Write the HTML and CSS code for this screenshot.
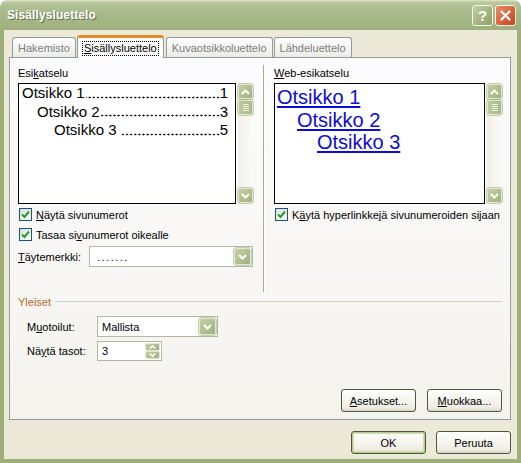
FILE: index.html
```html
<!DOCTYPE html>
<html lang="fi">
<head>
<meta charset="utf-8">
<title>Sisällysluettelo</title>
<link rel="stylesheet" href="styles.css">
</head>
<body>
<div class="window">
  <div class="titlebar">
    <span class="title">Sisällysluettelo</span>
    <div class="tb-buttons">
      <span class="tb-btn help">?</span>
      <span class="tb-btn close"><svg width="11" height="11" viewBox="0 0 11 11"><path d="M1.5 1.5 L9.5 9.5 M9.5 1.5 L1.5 9.5" stroke="#fff" stroke-width="2.2" stroke-linecap="round"/></svg></span>
    </div>
  </div>
  <div class="frame">
    <div class="tabs">
      <div class="tab">Hakemisto</div>
      <div class="tab selected"><span class="focus"><u>S</u>isällysluettelo</span></div>
      <div class="tab">Kuvaotsikkoluettelo</div>
      <div class="tab">Lähdeluettelo</div>
    </div>
    <div class="panel">
      <div class="panel-top">
        <div class="col col-left">
          <div class="field-label">Esi<u>k</u>atselu</div>
          <div class="preview-row">
            <div class="preview toc">
              <div class="toc-line"><span>Otsikko 1</span><span class="dots"></span><span>1</span></div>
              <div class="toc-line l2"><span>Otsikko 2</span><span class="dots"></span><span>3</span></div>
              <div class="toc-line l3"><span>Otsikko 3</span><span class="dots gap"></span><span>5</span></div>
            </div>
            <div class="scrollbar">
              <div class="sb-btn"><svg width="9" height="6" viewBox="0 0 9 6"><polyline points="1,5 4.5,1.5 8,5" fill="none" stroke="#fff" stroke-width="2"/></svg></div>
              <div class="sb-thumb"><i></i><i></i><i></i><i></i></div>
              <div class="sb-track"></div>
              <div class="sb-btn"><svg width="9" height="6" viewBox="0 0 9 6"><polyline points="1,1 4.5,4.5 8,1" fill="none" stroke="#fff" stroke-width="2"/></svg></div>
            </div>
          </div>
          <div class="check-row first"><span class="checkbox"><svg width="9" height="9" viewBox="0 0 9 9"><polyline points="1,4.5 3.5,7 8,1.5" fill="none" stroke="#21a121" stroke-width="2"/></svg></span><span><u>N</u>äytä sivunumerot</span></div>
          <div class="check-row second"><span class="checkbox"><svg width="9" height="9" viewBox="0 0 9 9"><polyline points="1,4.5 3.5,7 8,1.5" fill="none" stroke="#21a121" stroke-width="2"/></svg></span><span>Tasaa si<u>v</u>unumerot oikealle</span></div>
          <div class="fill-row">
            <span class="fill-label"><u>T</u>äytemerkki:</span>
            <div class="combo combo-fill"><span class="combo-text leader-text">.......</span><span class="drop-btn"><svg width="9" height="6" viewBox="0 0 9 6"><polyline points="1,1 4.5,4.5 8,1" fill="none" stroke="#fff" stroke-width="2"/></svg></span></div>
          </div>
        </div>
        <div class="vsep"></div>
        <div class="col col-right">
          <div class="field-label"><u>W</u>eb-esikatselu</div>
          <div class="preview-row">
            <div class="preview web">
              <div class="web-line"><span class="link">Otsikko 1</span></div>
              <div class="web-line w2"><span class="link">Otsikko 2</span></div>
              <div class="web-line w3"><span class="link">Otsikko 3</span></div>
            </div>
            <div class="scrollbar">
              <div class="sb-btn"><svg width="9" height="6" viewBox="0 0 9 6"><polyline points="1,5 4.5,1.5 8,5" fill="none" stroke="#fff" stroke-width="2"/></svg></div>
              <div class="sb-thumb"><i></i><i></i><i></i><i></i></div>
              <div class="sb-track"></div>
              <div class="sb-btn"><svg width="9" height="6" viewBox="0 0 9 6"><polyline points="1,1 4.5,4.5 8,1" fill="none" stroke="#fff" stroke-width="2"/></svg></div>
            </div>
          </div>
          <div class="check-row first"><span class="checkbox"><svg width="9" height="9" viewBox="0 0 9 9"><polyline points="1,4.5 3.5,7 8,1.5" fill="none" stroke="#21a121" stroke-width="2"/></svg></span><span>K<u>ä</u>ytä hyperlinkkejä sivunumeroiden sijaan</span></div>
        </div>
      </div>
      <div class="group-head"><span class="group-title">Yleiset</span><span class="group-line"></span></div>
      <div class="general">
        <div class="gen-row first">
          <span class="gen-label">M<u>u</u>otoilut:</span>
          <div class="combo combo-style"><span class="combo-text">Mallista</span><span class="drop-btn"><svg width="9" height="6" viewBox="0 0 9 6"><polyline points="1,1 4.5,4.5 8,1" fill="none" stroke="#fff" stroke-width="2"/></svg></span></div>
        </div>
        <div class="gen-row second">
          <span class="gen-label">Nä<u>y</u>tä tasot:</span>
          <div class="spin"><span class="combo-text">3</span><span class="spin-btns"><span class="spin-btn"><svg width="7" height="4" viewBox="0 0 7 4"><polyline points="0.8,3.5 3.5,0.8 6.2,3.5" fill="none" stroke="#fff" stroke-width="1.5"/></svg></span><span class="spin-btn"><svg width="7" height="4" viewBox="0 0 7 4"><polyline points="0.8,0.5 3.5,3.2 6.2,0.5" fill="none" stroke="#fff" stroke-width="1.5"/></svg></span></span></div>
        </div>
      </div>
      <div class="panel-buttons">
        <button class="btn"><span><u>A</u>setukset...</span></button>
        <button class="btn"><span><u>M</u>uokkaa...</span></button>
      </div>
    </div>
    <div class="dialog-buttons">
      <button class="btn default">OK</button>
      <button class="btn">Peruuta</button>
    </div>
  </div>
</div>
</body>
</html>
```
FILE: styles.css
```css
* { box-sizing: border-box; }
html, body { margin: 0; padding: 0; background: #ffffff; }
body {
  width: 521px;
  height: 463px;
  overflow: hidden;
  font-family: "Liberation Sans", Arial, sans-serif;
  font-size: 11px;
  color: #000;
}
u { text-decoration: underline; text-underline-offset: 1px; }

.window {
  width: 521px;
  height: 463px;
  display: flex;
  flex-direction: column;
}

.titlebar {
  height: 30px;
  flex: none;
  display: flex;
  align-items: center;
  justify-content: space-between;
  padding: 0 5px 0 7px;
  border-radius: 7px 7px 0 0;
  background: linear-gradient(#dfe6c9 0, #bccaa0 2px, #afbf92 6px, #a7b888 50%, #9fb17e 100%);
}
.title {
  color: #fff;
  font-weight: bold;
  font-size: 12px;
  letter-spacing: 0.1px;
  text-shadow: 1px 1px 0 #62704a;
}
.tb-buttons { display: flex; gap: 2px; }
.tb-btn {
  width: 21px;
  height: 21px;
  border: 1px solid #f4f6ee;
  border-radius: 3px;
  display: flex;
  align-items: center;
  justify-content: center;
}
.help {
  background: linear-gradient(135deg, #c3d0a4, #8c9f66);
  color: #fff;
  font-weight: bold;
  font-size: 15px;
}
.close { background: linear-gradient(135deg, #ea8c6c, #c5431c); }

.frame {
  flex: 1;
  display: flex;
  flex-direction: column;
  border: 4px solid #9db079;
  border-top: 0;
  background: #ece9d8;
  padding: 5px 6px 0 5px;
}

/* tabs */
.tabs {
  flex: none;
  height: 22px;
  display: flex;
  align-items: flex-end;
  padding-left: 3px;
  position: relative;
  z-index: 1;
}
.tab {
  height: 20px;
  padding: 0 5px;
  display: flex;
  align-items: center;
  justify-content: center;
  border: 1px solid #919b9c;
  border-bottom: 0;
  border-radius: 3px 3px 0 0;
  background: linear-gradient(#fefefe, #ecebe6);
  color: #7d7d7d;
  margin-right: 1px;
  white-space: nowrap;
}
.tab.selected {
  height: 23px;
  padding: 0 5px;
  margin-right: 2px;
  margin-bottom: -1px;
  color: #000;
  background: #fcfcfe;
  border-top: 3px solid #e68b2c;
}
.focus { outline: 1px dotted #000; outline-offset: 0; padding: 0 1px; line-height: 13px; }

/* panel */
.panel {
  flex: none;
  height: 363px;
  border: 1px solid #919b9c;
  background: linear-gradient(#fcfcfe, #f4f3ee);
  padding: 9px 8px 7px 8px;
  display: flex;
  flex-direction: column;
}
.panel-top { display: flex; }
.col-left { width: 235px; }
.col-right { width: 228px; }
.vsep {
  width: 2px;
  height: 227px;
  margin: -2px 9px 0 10px;
  border-left: 1px solid #aca899;
  border-right: 1px solid #ffffff;
}
.field-label { height: 13px; line-height: 13px; margin-bottom: 3px; }

.preview-row { display: flex; gap: 2px; height: 121px; }
.preview { flex: 1; min-width: 0; border: 1px solid #000; background: #fff; }

.toc {
  font-family: "Liberation Sans", Arial, sans-serif;
  font-size: 15px;
  line-height: 18.5px;
  padding: 0 7px 0 3px;
}
.toc-line { display: flex; white-space: nowrap; }
.dots {
  flex: 1;
  min-width: 0;
  align-self: flex-end;
  height: 3px;
  margin: 0 0 4px 1px;
  background-image: radial-gradient(circle at 50% 50%, #000 0.75px, transparent 1.15px);
  background-size: 4.15px 3px;
  background-position: right bottom;
  background-repeat: repeat-x;
}
.dots.gap { margin-left: 5px; }
.l2 { padding-left: 15px; }
.l3 { padding-left: 32px; }

.web {
  font-family: "Liberation Sans", Arial, sans-serif;
  font-size: 20px;
  line-height: 22.5px;
  padding: 2px 0 0 2px;
}
.link { color: #0c0cd6; text-decoration: underline; text-underline-offset: 2px; }
.w2 { padding-left: 20px; }
.w3 { padding-left: 40px; }

/* scrollbar */
.scrollbar {
  width: 15px;
  flex: none;
  display: flex;
  flex-direction: column;
  gap: 1px;
  padding: 1px 0;
  background: linear-gradient(90deg, #f1efe6, #fbfbf8);
}
.sb-btn, .sb-thumb {
  height: 15px;
  flex: none;
  border: 1px solid #e2e8cf;
  border-radius: 2px;
  background: linear-gradient(135deg, #c4d0a5, #9fb17f);
  box-shadow: 0 0 0 0.5px #8e9f6c;
  display: flex;
  align-items: center;
  justify-content: center;
}
.sb-thumb { flex-direction: column; gap: 1px; background: linear-gradient(90deg, #bccaa0, #a8b98a); }
.sb-thumb i { display: block; width: 6px; height: 1px; background: #eef2e2; }
.sb-track { flex: 1; }

/* checkboxes */
.check-row { display: flex; align-items: center; gap: 4px; height: 13px; padding-left: 1px; }
.check-row.first { margin-top: 4px; }
.check-row.second { margin-top: 7px; }
.checkbox {
  width: 13px;
  height: 13px;
  flex: none;
  border: 1px solid #1c5180;
  background: linear-gradient(135deg, #dcdcd7, #ffffff);
  display: flex;
  align-items: center;
  justify-content: center;
}

.fill-row { display: flex; align-items: center; margin-top: 5px; }
.fill-label { width: 71px; }

.combo, .spin {
  height: 21px;
  border: 1px solid #b3b8a5;
  background: #fff;
  display: flex;
  align-items: center;
  padding: 1px;
}
.combo-fill { width: 164px; }
.combo-style { width: 121px; }
.combo-text { flex: 1; padding-left: 3px; }
.leader-text { letter-spacing: 1.5px; padding-left: 6px; }
.drop-btn {
  width: 17px;
  height: 17px;
  border: 1px solid #e2e8cf;
  border-radius: 2px;
  background: linear-gradient(135deg, #c4d0a5, #9fb17f);
  box-shadow: 0 0 0 0.5px #8e9f6c;
  display: flex;
  align-items: center;
  justify-content: center;
}

/* general group */
.group-head {
  display: flex;
  align-items: center;
  gap: 4px;
  height: 13px;
  margin-top: 3px;
}
.group-title { color: #b8682b; }
.group-line { flex: 1; height: 1px; background: #d3d2c6; }

.general { padding-left: 9px; }
.gen-row { display: flex; align-items: center; }
.gen-row.first { margin-top: 8px; }
.gen-row.second { margin-top: 4px; }
.gen-label { width: 70px; }
.spin { width: 65px; height: 20px; }
.spin-btns { display: flex; flex-direction: column; gap: 0; }
.spin-btn {
  width: 15px;
  height: 8px;
  border: 1px solid #e2e8cf;
  border-radius: 2px;
  background: linear-gradient(135deg, #c4d0a5, #9fb17f);
  display: flex;
  align-items: center;
  justify-content: center;
}

/* buttons */
.panel-buttons {
  margin-top: auto;
  display: flex;
  justify-content: flex-end;
  gap: 11px;
}
.dialog-buttons {
  flex: none;
  margin-top: 11px;
  display: flex;
  justify-content: flex-end;
  gap: 10px;
}
.btn {
  width: 75px;
  height: 23px;
  padding: 0;
  margin: 0;
  border: 1px solid #4b583a;
  border-radius: 3px;
  background: linear-gradient(#ffffff 0%, #f7f6f1 40%, #eeece2 85%, #d9d4c6 100%);
  font-family: "Liberation Sans", Arial, sans-serif;
  font-size: 11px;
  color: #000;
  display: flex;
  align-items: center;
  justify-content: center;
}
.btn.default {
  box-shadow: inset 0 0 0 1px #b7cb91, inset 0 0 0 2px #d0ddb4;
}
```
